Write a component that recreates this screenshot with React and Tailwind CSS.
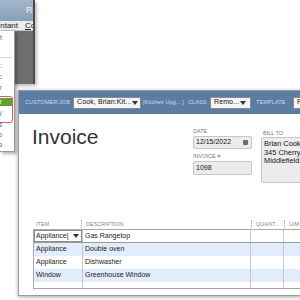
const Caret = () => (
  <svg width="6" height="4" viewBox="0 0 6 4" className="shrink-0">
    <path d="M0 0 L6 0 L3 4 Z" fill="#333" />
  </svg>
);

function Select({ text, className }) {
  return (
    <div
      className={`h-[12px] shrink-0 bg-[#f4f4f4] border border-[#8a8a8a] rounded-[1px] flex items-center justify-between pl-[3px] pr-[4px] text-[7px] text-[#111] overflow-hidden ${className}`}
    >
      <span className="whitespace-nowrap">{text}</span>
      <Caret />
    </div>
  );
}

function MenuItem({ text, color, h = "h-[11px]" }) {
  return (
    <div className={`${h} w-[14px] flex items-center justify-end pr-[12px] overflow-hidden text-[7px] whitespace-nowrap ${color}`}>
      <span>{text}</span>
    </div>
  );
}

const rows = [
  { item: "Appliance", desc: "Gas Rangetop", active: true },
  { item: "Appliance", desc: "Double oven", blue: true },
  { item: "Appliance", desc: "Dishwasher" },
  { item: "Window", desc: "Greenhouse Window", blue: true },
];

export default function App() {
  return (
    <div className="relative w-[300px] h-[300px] overflow-hidden bg-white font-['Liberation_Sans',Arial,sans-serif]">
      {/* back window */}
      <div className="absolute left-0 top-0 w-[35px] flex flex-col overflow-hidden border-r-2 border-[#4a4a4a] shadow-[2px_2px_3px_rgba(0,0,0,0.25)]">
        <div className="h-[21px] shrink-0 bg-gradient-to-b from-[#a3b6cc] to-[#889fba] flex items-center pl-[26px] text-[9px] text-[#eef3f9] whitespace-nowrap">
          Rebuild
        </div>
        <div className="h-[10px] shrink-0 bg-[#ebebeb] border-b border-[#c4c4c4] flex items-center gap-[7px] text-[8px] text-[#222] whitespace-nowrap">
          <span className="-ml-[22px]">Accountant</span>
          <span>
            <span className="underline">C</span>ompany
          </span>
        </div>
        <div className="h-[53px] shrink-0 bg-[#6f6f6f]" />
      </div>

      {/* dropdown menu */}
      <div className="absolute left-0 top-[31px] w-[15px] h-[121px] bg-white border-r border-b border-[#9a9a9a] shadow-[2px_2px_3px_rgba(0,0,0,0.3)] flex flex-col pt-[2px]">
        <MenuItem text="Chart" color="text-[#5a6f98]" h="h-[10px]" />
        <div className="h-[14px]" />
        <div className="h-[1px] w-[12px] bg-[#d8d8d8]" />
        <div className="h-[3px]" />
        <MenuItem text="List:" color="text-[#6a7fa8]" />
        <MenuItem text="Spec" color="text-[#6a7fa8]" />
        <MenuItem text="Othr" color="text-[#6a7fa8]" />
        <div className="h-[4px]" />
        <div className="h-[8px] w-[13px] bg-[#5fa130] flex items-center justify-end pr-[11px] overflow-hidden text-[7px] text-white whitespace-nowrap">
          <span>Enter</span>
        </div>
        <div className="h-[2px]" />
        <MenuItem text="Pay" color="text-[#6a7fa8]" h="h-[10px]" />
        <div className="h-[2px]" />
        <MenuItem text="Bills" color="text-[#3c5fae]" h="h-[10px]" />
        <MenuItem text="Job" color="text-[#6c4a9e]" h="h-[10px]" />
        <MenuItem text="Tab" color="text-[#2f3f8f]" h="h-[10px]" />
        <div className="absolute left-[-3px] top-[65px] w-[16px] h-[27px] border border-[#e05a5a] rounded-[3px]" />
      </div>

      {/* invoice window */}
      <div className="absolute left-[18px] top-[90px] w-[290px] h-[206px] bg-white border border-[#9c9c9c] shadow-[0_1px_4px_rgba(0,0,0,0.35)] flex flex-col">
        {/* header bar */}
        <div className="h-[23px] shrink-0 bg-[#5b7ca3] flex items-center pl-[6px] text-[5.5px] text-[#d0dbe8] whitespace-nowrap tracking-[0.02em]">
          <span className="w-[48px] shrink-0">CUSTOMER:JOB</span>
          <Select text="Cook, Brian:Kit..." className="w-[68px]" />
          <span className="w-[47px] shrink-0 pl-[2px] text-[5.5px]">[Kitchen Upg... ]</span>
          <span className="w-[22px] shrink-0">CLASS</span>
          <Select text="Remo..." className="w-[41px]" />
          <span className="w-[42px] shrink-0 pl-[5px]">TEMPLATE</span>
          <Select text="Rock Castle" className="w-[40px]" />
        </div>

        {/* top section */}
        <div className="flex pt-[14px]">
          <div className="w-[174px] shrink-0 pl-[13px] -mt-[2px] text-[21px] leading-[21px] text-[#333]">Invoice</div>
          <div className="w-[59px] shrink-0 flex flex-col">
            <div className="h-[6px] text-[5.5px] leading-[6px] text-[#777]">DATE</div>
            <div className="mt-[2px] h-[13px] bg-[#ececec] border border-[#c6c6c6] rounded-[2px] flex items-center justify-between pl-[2px] pr-[3px] text-[7px] text-[#111]">
              <span>12/15/2022</span>
              <div className="w-[5px] h-[5px] bg-[#6d6d6d] rounded-[1px]" />
            </div>
            <div className="mt-[4px] h-[6px] text-[5.5px] leading-[6px] text-[#777]">INVOICE #</div>
            <div className="mt-[2px] h-[14px] bg-[#ececec] border border-[#c6c6c6] rounded-[2px] flex items-center pl-[2px] text-[7px] text-[#111]">
              1098
            </div>
          </div>
          <div className="ml-[9px] flex-1 flex flex-col mt-[2px]">
            <div className="h-[6px] text-[5.5px] leading-[6px] text-[#777] pl-[2px]">BILL TO</div>
            <div className="mt-[1px] h-[46px] bg-[#ececec] border border-[#c6c6c6] rounded-[2px] pl-[2px] pt-[2px] text-[7.4px] leading-[8.5px] text-[#111] whitespace-nowrap overflow-hidden">
              <div>Brian Cook</div>
              <div>345 Cherry Lane</div>
              <div>Middlefield CA 94482</div>
            </div>
          </div>
        </div>

        {/* table */}
        <div className="ml-[14px] mt-[37px] flex flex-col">
          <div className="h-[8px] flex items-center text-[5.5px] text-[#888] whitespace-nowrap">
            <div className="w-[48px] pl-[3px]">ITEM</div>
            <div className="h-[8px] border-l border-dotted border-[#aaa]" />
            <div className="w-[169px] pl-[4px]">DESCRIPTION</div>
            <div className="h-[8px] border-l border-dotted border-[#aaa]" />
            <div className="w-[32px] pl-[4px]">QUANT...</div>
            <div className="h-[8px] border-l border-dotted border-[#aaa]" />
            <div className="pl-[4px]">U/M</div>
          </div>
          <div className="mt-[1px] border-t border-l border-b border-[#a8a8a8] text-[7px] text-[#222]">
            {rows.map((r, i) => (
              <div
                key={i}
                className={`h-[13px] flex ${r.blue ? "bg-[#e2edfb]" : "bg-white"} ${r.active ? "border-b border-[#9a9a9a]" : ""}`}
              >
                <div className="w-[49px] shrink-0 border-r border-[#c8c8c8] flex items-center">
                  {r.active ? (
                    <div className="w-full h-full border border-[#8d8d8d] bg-white flex items-center justify-between pl-[1px] pr-[2px]">
                      <span>
                        {r.item}
                        <span className="text-[#000]">|</span>
                      </span>
                      <Caret />
                    </div>
                  ) : (
                    <span className="pl-[2px]">{r.item}</span>
                  )}
                </div>
                <div className="w-[168px] shrink-0 border-r border-[#c8c8c8] flex items-center pl-[2px]">{r.desc}</div>
                <div className="w-[33px] shrink-0 border-r border-[#c8c8c8]" />
                <div className="flex-1" />
              </div>
            ))}
            <div className="h-[6px] flex bg-white">
              <div className="w-[49px] shrink-0 border-r border-[#c8c8c8]" />
              <div className="w-[168px] shrink-0 border-r border-[#c8c8c8]" />
              <div className="w-[33px] shrink-0 border-r border-[#c8c8c8]" />
            </div>
          </div>
        </div>
      </div>
    </div>
  );
}
